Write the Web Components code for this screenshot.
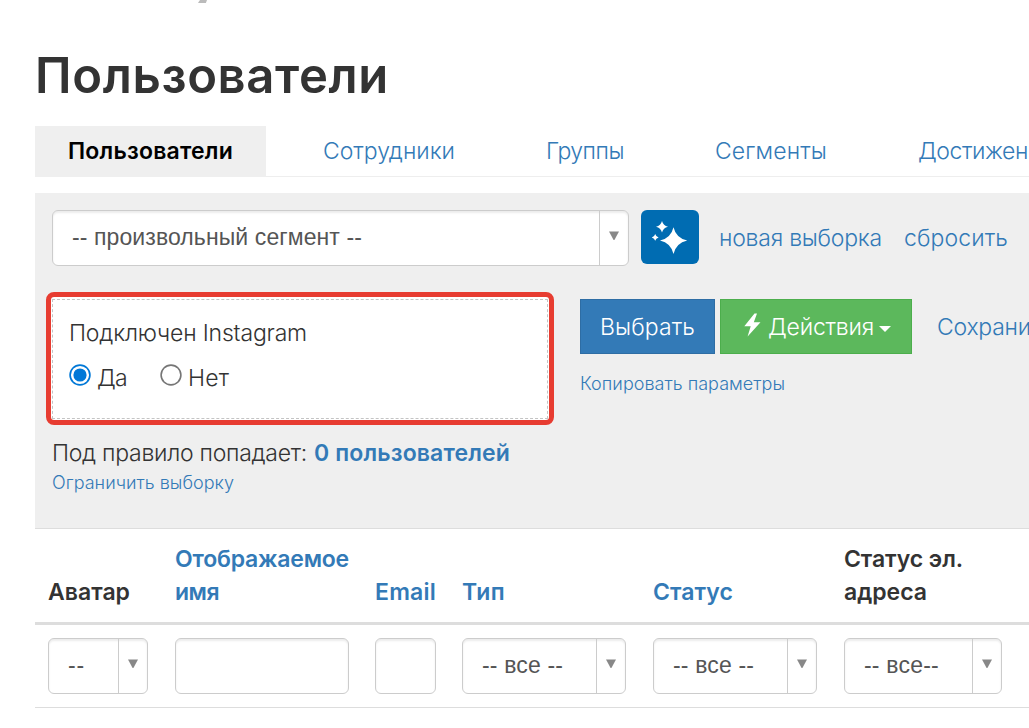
<!DOCTYPE html>
<html lang="ru">
<head>
<meta charset="utf-8">
<title>Пользователи</title>
<style>
  body {
    margin: 0;
    width: 1029px;
    height: 728px;
    overflow: hidden;
    background: #fff;
    color: #333;
    font-family: Inter, "Noto Sans", sans-serif;
    font-size: 23px;
    font-weight: 330;
  }
</style>
</head>
<body>
<users-page></users-page>

<script>
// one line of text tracked to a fixed width
class FitText extends HTMLElement {
  constructor() {
    super();
    this.attachShadow({ mode: 'open' }).innerHTML = `
<style>
:host { display: block; flex: none; white-space: nowrap; }
span { display: inline-block; }
</style>
<span><slot></slot></span>`;
  }

  connectedCallback() {
    const width = Number(this.getAttribute('width'));
    const span = this.shadowRoot.querySelector('span');
    const natural = span.getBoundingClientRect().width;
    span.style.letterSpacing = (width - natural) / this.textContent.length + 'px';
    this.style.width = width + 'px';
  }
}

class TabBar extends HTMLElement {
  constructor() {
    super();
    this.attachShadow({ mode: 'open' }).innerHTML = `
<style>
:host {
  display: flex;
  height: 50px;
  border-bottom: 1px solid #eee;
  line-height: 51px;
  color: #337ab7;
}
</style>
<slot></slot>`;
  }
}

class TabItem extends HTMLElement {
  constructor() {
    super();
    this.attachShadow({ mode: 'open' }).innerHTML = `
<style>
:host { display: block; flex: none; padding: 0 34px 0 57px; }
:host([active]) {
  height: 51px;
  padding: 0 33px;
  background: #efefef;
  color: #000;
  font-weight: 600;
}
</style>
<slot></slot>`;
  }
}

class SelectBox extends HTMLElement {
  constructor() {
    super();
    this.attachShadow({ mode: 'open' }).innerHTML = `
<style>
:host {
  display: flex;
  box-sizing: border-box;
  height: 56px;
  border: 1px solid #ccc;
  border-radius: 6px;
  background: #fff;
  box-shadow: inset 0 2px 2px rgba(0, 0, 0, 0.075);
  color: #555;
  font: 23px/52px "Liberation Sans", Arial, sans-serif;
}
.value { flex: 1; padding-left: 19px; min-width: 0; }
.arrow {
  width: 28px;
  border-left: 1px solid #ccc;
}
svg { display: block; margin: 20px 0 0 9px; }
</style>
<div class="value"><slot></slot></div>
<div class="arrow"><svg width="10" height="9" viewBox="0 0 10 9"><path d="M0 0.5H10L5.4 9H4.6Z" fill="#888"/></svg></div>`;
  }
}

class TextBox extends HTMLElement {
  constructor() {
    super();
    this.attachShadow({ mode: 'open' }).innerHTML = `
<style>
:host {
  display: block;
  box-sizing: border-box;
  height: 56px;
  border: 1px solid #ccc;
  border-radius: 6px;
  box-shadow: inset 0 2px 2px rgba(0, 0, 0, 0.075);
}
</style>`;
  }
}

class UiButton extends HTMLElement {
  constructor() {
    super();
    this.attachShadow({ mode: 'open' }).innerHTML = `
<style>
:host {
  display: flex;
  flex: none;
  box-sizing: border-box;
  height: 55px;
  padding: 0 19px;
  border: 1px solid #2e6da4;
  background: #337ab7;
  color: #fff;
  line-height: 54px;
}
:host([kind="success"]) {
  padding: 0 20px 0 23px;
  border-color: #4cae4c;
  background: #5cb85c;
}
</style>
<slot></slot>`;
  }
}

class MagicButton extends HTMLElement {
  constructor() {
    super();
    this.attachShadow({ mode: 'open' }).innerHTML = `
<style>
:host {
  display: block;
  flex: none;
  width: 58px;
  height: 54px;
  border-radius: 6px;
  background: #006cb2;
}
svg { display: block; }
</style>
<svg width="58" height="54" viewBox="0 0 58 54" fill="#fff">
  <path d="M32.5 17.2Q35 28 46.2 30.5Q35 33 32.5 44Q30 33 19 30.5Q30 28 32.5 17.2Z"/>
  <path d="M21 11Q22.2 15.5 27 16.7Q22.2 17.9 21 22.6Q19.8 17.9 15 16.7Q19.8 15.5 21 11Z"/>
  <path d="M14.2 24Q14.9 26.7 17.6 27.4Q14.9 28.1 14.2 30.8Q13.5 28.1 10.8 27.4Q13.5 26.7 14.2 24Z"/>
</svg>`;
  }
}

class RadioOption extends HTMLElement {
  constructor() {
    super();
    this.attachShadow({ mode: 'open' }).innerHTML = `
<style>
:host { display: flex; gap: 6px; line-height: 35px; }
svg { display: block; margin-top: 3px; }
circle { fill: #fff; stroke: #767676; stroke-width: 1.6; }
.dot { display: none; }
:host([checked]) circle { stroke: #0078d7; stroke-width: 1.7; }
:host([checked]) .dot { display: block; fill: #0078d7; stroke: none; }
</style>
<svg width="22" height="22" viewBox="0 0 22 22">
  <circle cx="11" cy="11" r="9.9"/>
  <circle class="dot" cx="11" cy="11" r="6.6"/>
</svg>
<slot></slot>`;
  }
}

// condition card with the red marker frame around it
class RuleCard extends HTMLElement {
  constructor() {
    super();
    this.attachShadow({ mode: 'open' }).innerHTML = `
<style>
:host {
  display: block;
  flex: none;
  box-sizing: border-box;
  width: 508px;
  height: 133px;
  border: 5px solid #e73c31;
  border-radius: 8px;
  background: #fff;
  padding: 2px 1px 1px;
}
.body {
  box-sizing: border-box;
  height: 120px;
  border: 1px dashed #c4c4c4;
  padding: 17px 16px;
}
.options { display: flex; gap: 33px; margin-top: 11px; }
</style>
<div class="body">
  <slot name="title"></slot>
  <div class="options"><slot></slot></div>
</div>`;
  }
}

class FilterPanel extends HTMLElement {
  constructor() {
    super();
    this.attachShadow({ mode: 'open' }).innerHTML = `
<style>
:host {
  display: block;
  box-sizing: border-box;
  height: 336px;
  margin-top: 16px;
  padding: 17px 0 0 17px;
  background: #efefef;
  border-bottom: 1px solid #ddd;
}
.row { display: flex; }
.link { color: #337ab7; }
.segment { height: 56px; line-height: 56px; }
.segment select-box { flex: none; width: 577px; }
magic-button { margin: 0 20px 0 12px; }
.reset { margin-left: 22px; }
.rule { margin: 26px 0 0 -6px; }
.actions { margin: 7px 0 0 26px; }
.save { margin-left: 25px; line-height: 56px; }
.bolt { margin: 13px 7px 0 0; }
.caret { margin: 26px 0 0 5px; }
ui-button + ui-button { margin-left: 5px; }
.small { font-size: 18px; line-height: 26px; }
.copy { margin-top: 16px; }
.total { margin-top: 11px; line-height: 34px; }
.total b { margin-left: 7px; font-weight: 600; color: #337ab7; }
</style>
<div class="row segment">
  <select-box><fit-text width="290">-- произвольный сегмент --</fit-text></select-box>
  <magic-button></magic-button>
  <fit-text class="link" width="163">новая выборка</fit-text>
  <fit-text class="link reset" width="104">сбросить</fit-text>
</div>
<div class="row rule">
  <rule-card>
    <fit-text slot="title" width="238" style="line-height: 33px">Подключен Instagram</fit-text>
    <radio-option checked><fit-text width="30">Да</fit-text></radio-option>
    <radio-option><fit-text width="41">Нет</fit-text></radio-option>
  </rule-card>
  <div class="actions">
    <div class="row">
      <ui-button><fit-text width="95">Выбрать</fit-text></ui-button>
      <ui-button kind="success">
        <svg class="bolt" width="17" height="24" viewBox="0 0 17 24"><path d="M10.5 0.5L0.3 13.2H6.7L3.6 23.4L16.5 9.2H9.8L13 0.5Z" fill="#fff"/></svg>
        <fit-text width="106">Действия</fit-text>
        <svg class="caret" width="12" height="6" viewBox="0 0 12 6"><path d="M0 0H12L6 6Z" fill="#fff"/></svg>
      </ui-button>
      <fit-text class="link save" width="94">Сохрани</fit-text>
    </div>
    <fit-text class="link small copy" width="205">Копировать параметры</fit-text>
  </div>
</div>
<div class="row total">
  <fit-text width="255">Под правило попадает:</fit-text>
  <b><fit-text width="196">0 пользователей</fit-text></b>
</div>
<fit-text class="link small" width="182">Ограничить выборку</fit-text>`;
  }
}

class UsersTable extends HTMLElement {
  constructor() {
    super();
    this.attachShadow({ mode: 'open' }).innerHTML = `
<style>
:host { display: block; }
.row {
  display: grid;
  grid-template-columns: 127px 200px 87px 191px 191px 158px;
  padding-left: 13px;
}
.head {
  align-items: end;
  height: 80px;
  padding-bottom: 13px;
  border-bottom: 3px solid #ddd;
  line-height: 33px;
  font-weight: 600;
}
.filters { height: 69px; padding-top: 13px; border-bottom: 1px solid #ddd; }
select-box { margin-right: 27px; }
text-box { margin-right: 26px; }
select-box:last-child { margin-right: 0; }
.sortable { color: #337ab7; }
</style>
<div class="row head">
  <div><fit-text width="82">Аватар</fit-text></div>
  <div class="sortable"><fit-text width="174">Отображаемое</fit-text><fit-text width="44">имя</fit-text></div>
  <div class="sortable"><fit-text width="61">Email</fit-text></div>
  <div class="sortable"><fit-text width="43">Тип</fit-text></div>
  <div class="sortable"><fit-text width="80">Статус</fit-text></div>
  <div><fit-text width="119">Статус эл.</fit-text><fit-text width="83">адреса</fit-text></div>
</div>
<div class="row filters">
  <select-box><fit-text width="17">--</fit-text></select-box>
  <text-box></text-box>
  <text-box></text-box>
  <select-box><fit-text width="81">-- все --</fit-text></select-box>
  <select-box><fit-text width="81">-- все --</fit-text></select-box>
  <select-box><fit-text width="75">-- все--</fit-text></select-box>
</div>`;
  }
}

class UsersPage extends HTMLElement {
  constructor() {
    super();
    this.attachShadow({ mode: 'open' }).innerHTML = `
<style>
:host { display: block; padding-left: 35px; overflow: hidden; }
.crumb {
  width: 9px;
  height: 3px;
  margin-left: 163px;
  background: #bbb;
  clip-path: polygon(22% 0, 100% 0, 88% 100%, 0 100%);
}
h1 {
  margin: 0;
  height: 123px;
  padding-top: 42px;
  box-sizing: border-box;
  font-size: 49px;
  line-height: 61px;
  font-weight: 600;
}
</style>
<div class="crumb"></div>
<h1><fit-text width="354">Пользователи</fit-text></h1>
<tab-bar>
  <tab-item active><fit-text width="165">Пользователи</fit-text></tab-item>
  <tab-item><fit-text width="132">Сотрудники</fit-text></tab-item>
  <tab-item><fit-text width="78">Группы</fit-text></tab-item>
  <tab-item><fit-text width="112">Сегменты</fit-text></tab-item>
  <tab-item><fit-text width="110">Достижен</fit-text></tab-item>
</tab-bar>
<filter-panel></filter-panel>
<users-table></users-table>`;
  }
}

customElements.define('select-box', SelectBox);
customElements.define('text-box', TextBox);
customElements.define('ui-button', UiButton);
customElements.define('magic-button', MagicButton);
customElements.define('radio-option', RadioOption);
customElements.define('rule-card', RuleCard);
customElements.define('tab-item', TabItem);
customElements.define('tab-bar', TabBar);
customElements.define('filter-panel', FilterPanel);
customElements.define('users-table', UsersTable);
customElements.define('users-page', UsersPage);
customElements.define('fit-text', FitText);
</script>
</body>
</html>
